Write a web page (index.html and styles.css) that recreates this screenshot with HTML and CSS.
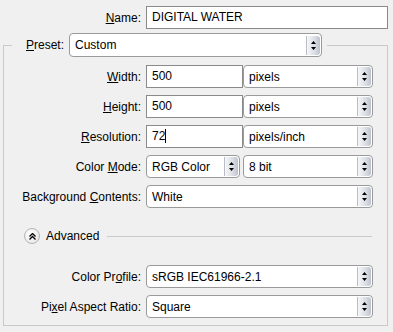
FILE: index.html
```html
<!DOCTYPE html>
<html lang="en">
<head>
  <meta charset="UTF-8">
  <title>New</title>
  <link rel="stylesheet" href="styles.css">
</head>
<body>

<div class="name-row">
  <label class="lbl"><u>N</u>ame:</label>
  <div class="input wide">DIGITAL WATER</div>
</div>

<fieldset class="group">
  <legend class="preset">
    <label class="lbl"><u>P</u>reset:</label>
    <div class="select preset-select"><span>Custom</span><i class="arrow"><svg width="5" height="9" viewBox="0 0 5 9"><path d="M2.5 0L5 3H0z M2.5 9L0 6h5z" fill="#000"/></svg></i></div>
  </legend>

  <div class="row">
    <label class="lbl"><u>W</u>idth:</label>
    <div class="input">500</div>
    <div class="select"><span>pixels</span><i class="arrow"><svg width="5" height="9" viewBox="0 0 5 9"><path d="M2.5 0L5 3H0z M2.5 9L0 6h5z" fill="#000"/></svg></i></div>
  </div>

  <div class="row">
    <label class="lbl"><u>H</u>eight:</label>
    <div class="input">500</div>
    <div class="select"><span>pixels</span><i class="arrow"><svg width="5" height="9" viewBox="0 0 5 9"><path d="M2.5 0L5 3H0z M2.5 9L0 6h5z" fill="#000"/></svg></i></div>
  </div>

  <div class="row">
    <label class="lbl"><u>R</u>esolution:</label>
    <div class="input">72<b class="caret"></b></div>
    <div class="select"><span>pixels/inch</span><i class="arrow"><svg width="5" height="9" viewBox="0 0 5 9"><path d="M2.5 0L5 3H0z M2.5 9L0 6h5z" fill="#000"/></svg></i></div>
  </div>

  <div class="row">
    <label class="lbl">Color <u>M</u>ode:</label>
    <div class="select short"><span>RGB Color</span><i class="arrow"><svg width="5" height="9" viewBox="0 0 5 9"><path d="M2.5 0L5 3H0z M2.5 9L0 6h5z" fill="#000"/></svg></i></div>
    <div class="select"><span>8 bit</span><i class="arrow"><svg width="5" height="9" viewBox="0 0 5 9"><path d="M2.5 0L5 3H0z M2.5 9L0 6h5z" fill="#000"/></svg></i></div>
  </div>

  <div class="row">
    <label class="lbl">Background <u>C</u>ontents:</label>
    <div class="select span"><span>White</span><i class="arrow"><svg width="5" height="9" viewBox="0 0 5 9"><path d="M2.5 0L5 3H0z M2.5 9L0 6h5z" fill="#000"/></svg></i></div>
  </div>

  <div class="advanced">
    <span class="toggle"><svg width="7" height="7" viewBox="0 0 7 7"><path d="M0.5 3.5L3.5 0.5L6.5 3.5 M0.5 6.5L3.5 3.5L6.5 6.5" fill="none" stroke="#000" stroke-width="1.3"/></svg></span>
    <span>Advanced</span>
    <span class="rule"></span>
  </div>

  <div class="row">
    <label class="lbl">Color Pr<u>o</u>file:</label>
    <div class="select span"><span>sRGB IEC61966-2.1</span><i class="arrow"><svg width="5" height="9" viewBox="0 0 5 9"><path d="M2.5 0L5 3H0z M2.5 9L0 6h5z" fill="#000"/></svg></i></div>
  </div>

  <div class="row">
    <label class="lbl">Pi<u>x</u>el Aspect Ratio:</label>
    <div class="select span"><span>Square</span><i class="arrow"><svg width="5" height="9" viewBox="0 0 5 9"><path d="M2.5 0L5 3H0z M2.5 9L0 6h5z" fill="#000"/></svg></i></div>
  </div>
</fieldset>

</body>
</html>
```

FILE: styles.css
```css
body { margin: 0; background: #f0f0f0; font-family: "Liberation Sans", Arial, sans-serif; font-size: 12px; color: #000; }
u { text-decoration: underline; text-underline-offset: 1px; }

.lbl { text-align: right; white-space: nowrap; }

.name-row { display: grid; grid-template-columns: 141px 242px; column-gap: 5px; align-items: center; height: 23px; margin-top: 6px; }

.input { height: 21px; line-height: 21px; border: 1px solid #8a8a8a; background: #fff; padding-left: 5px; white-space: nowrap; }
.caret { display: inline-block; width: 1px; height: 14px; background: #000; vertical-align: -3px; }

.select { height: 21px; display: flex; align-items: center; border: 1px solid #9a9a9a; border-radius: 4px; background: #fff; padding-left: 5px; }
.select span { flex: 1; white-space: nowrap; overflow: hidden; }
.select .arrow { width: 13px; height: 19px; margin-right: 1px; display: flex; align-items: center; justify-content: center; border-left: 1px solid #b9bdc6; border-radius: 0 3px 3px 0; background: linear-gradient(to right, #f6f7f9, #d9dde4 60%, #bcc2cc); }
.select .arrow svg { display: block; }

.group { margin: 4px 0 0 3px; width: 385px; box-sizing: border-box; padding: 0 0 7px 0; border: 1px solid #c9c9c9; }
.preset { display: flex; align-items: center; padding: 0 5px 0 14px; margin-left: 8px; gap: 5px; }
.preset-select { width: 246px; height: 22px; }

.row { display: grid; grid-template-columns: 137px 92px 130px; column-gap: 5px; align-items: center; height: 23px; margin-top: 7px; }
.row:nth-of-type(1) { margin-top: 8px; }
.row .input { width: 90px; }
.row .select.short { width: 87px; }
.row .select.span { grid-column: 2 / 4; }

.advanced { display: flex; align-items: center; gap: 6px; height: 16px; margin: 20px 0 21px 20px; }
.toggle { width: 14px; height: 14px; border-radius: 50%; border: 1px solid #b5b5b5; background: radial-gradient(circle at 40% 35%, #ffffff, #e2e2e2); display: flex; align-items: center; justify-content: center; }
.advanced .rule { flex: 0 0 265px; height: 1px; background: #c9c9c9; margin-left: 2px; }
```
